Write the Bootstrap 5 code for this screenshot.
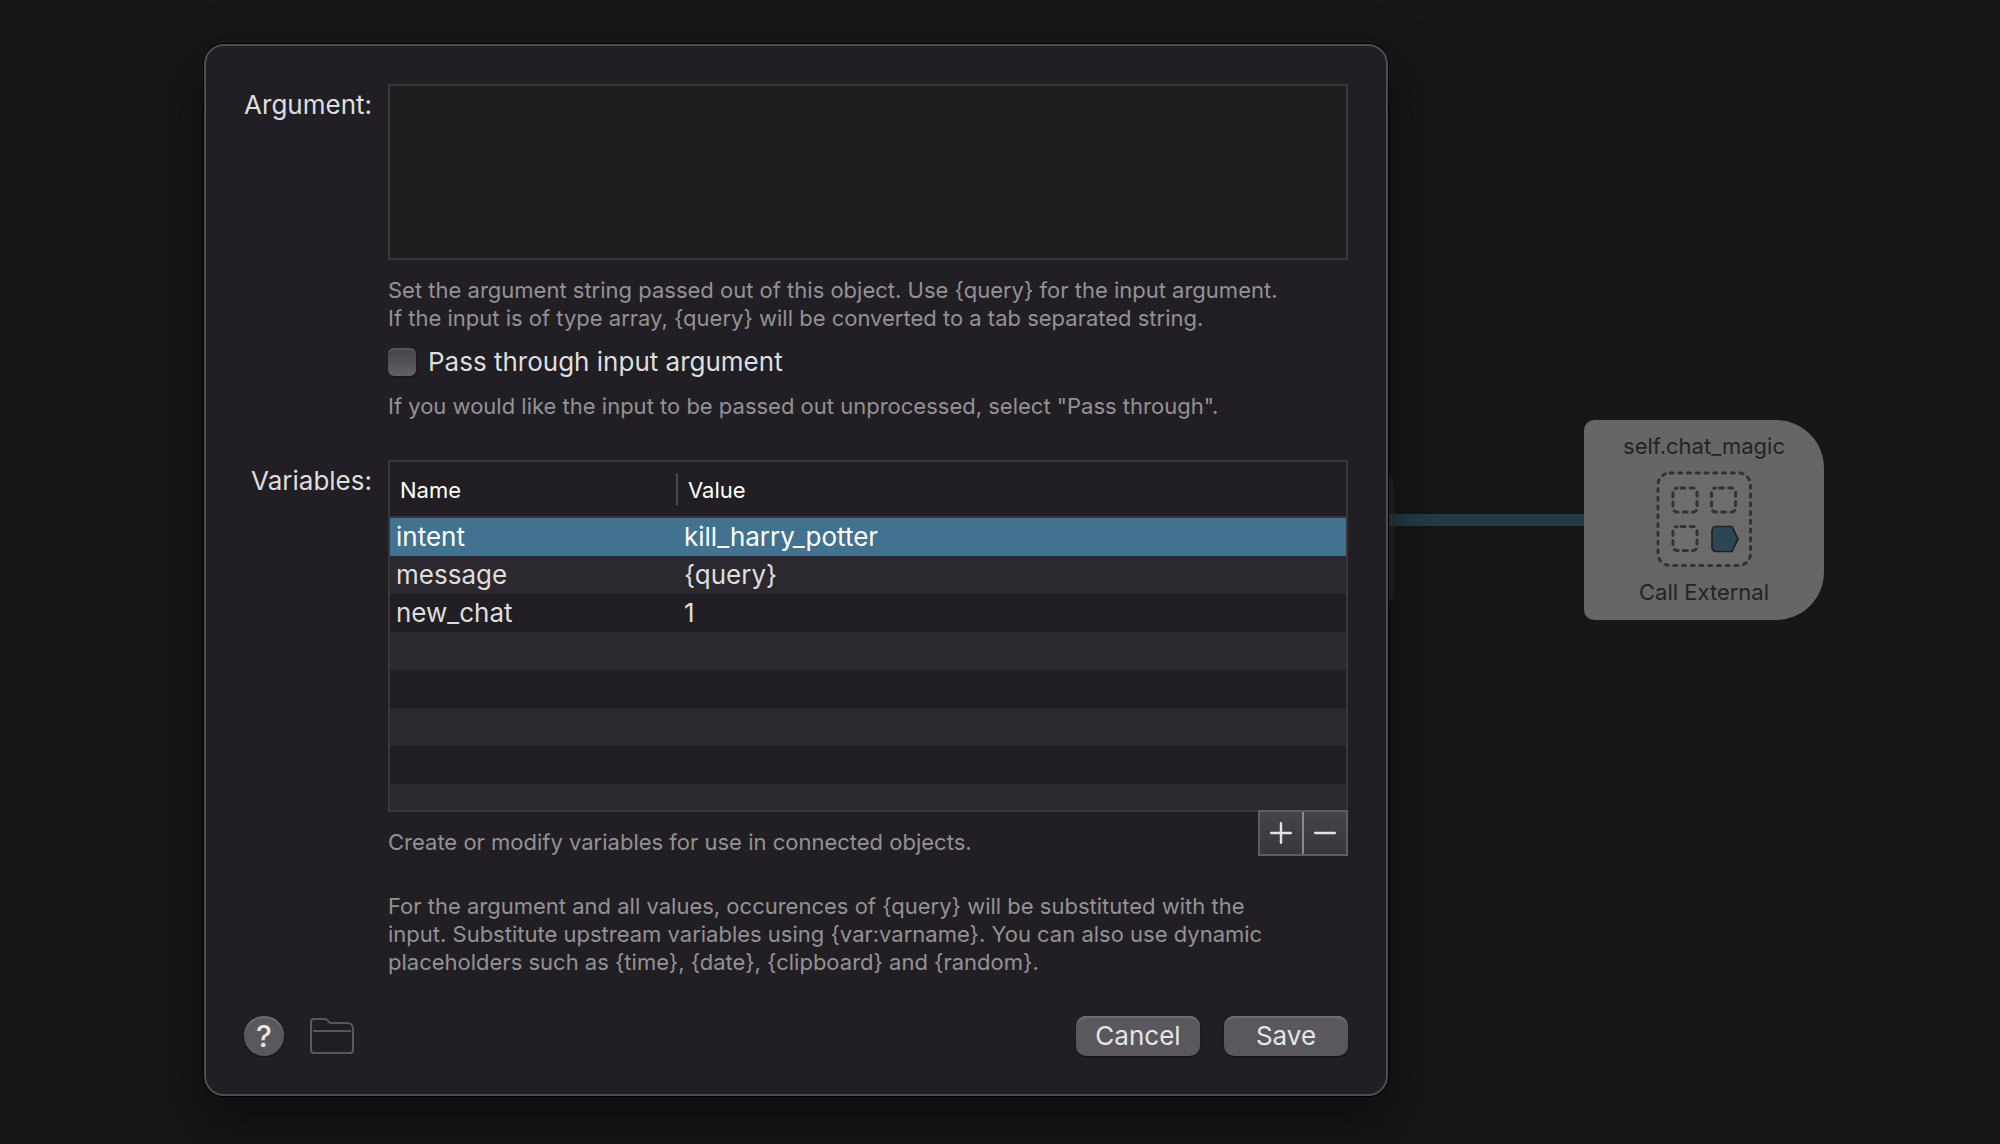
<!DOCTYPE html>
<html lang="en">
<head>
<meta charset="utf-8">
<meta name="viewport" content="width=device-width, initial-scale=1">
<title>Arg and Vars</title>
<link rel="stylesheet" href="https://cdn.jsdelivr.net/npm/bootstrap@5.3.0/dist/css/bootstrap.min.css">
<script src="https://cdn.jsdelivr.net/npm/bootstrap@5.3.0/dist/js/bootstrap.bundle.min.js"></script>
<style>
  body { background: #171717; color: #dededf; font-family: Inter, "Liberation Sans", sans-serif; font-size: 26px; line-height: 32px; }
  .stage { padding: 44px 204px 48px; min-height: 100vh; }
  /* workflow canvas behind the sheet */
  .flow-canvas { inset: 0; overflow: hidden; }
  .flow-link { left: 1300px; top: 514px; width: 284px; height: 12px; background: #243c46; }
  .prev-node { left: 1154px; top: 472px; width: 240px; height: 132px; border-radius: 12px; background: rgba(60, 58, 30, .35); }
  .flow-node { left: 1584px; top: 420px; width: 240px; height: 200px; border-radius: 10px 48px 48px 10px; background: #666; color: #232323; font-size: 22px; line-height: 28px; padding: 12px 0 14px; }
  /* sheet */
  .sheet { width: 100%; max-width: 1184px; padding: 38px; background: #211f24; border: 2px solid #4e4d51; border-radius: 20px; box-shadow: 0 0 0 1px #000, 0 24px 56px 4px rgba(0, 0, 0, .45); }
  .side-label { width: 128px; padding-top: 5px; flex: none; text-align: right; white-space: nowrap; }
  .field-row { gap: 16px; }
  .arg-box { display: block; width: 100%; height: 176px; background: #1e1e1e; border: 2px solid #39383b; border-radius: 0; color: inherit; resize: none; padding: 6px; }
  .hint { font-size: 22px; line-height: 28px; color: #939295; margin: 0; }
  .stack { gap: 16px; }
  .tick-row { gap: 12px; line-height: 28px; }
  .tick { appearance: none; width: 28px; height: 28px; margin: 0; border-radius: 6px; background: linear-gradient(#454348, #626065); box-shadow: inset 0 2px 0 #58565b, 0 1px 2px rgba(0, 0, 0, .4); }
  .var-frame { height: 352px; overflow: hidden; border: 2px solid #39373c; }
  .var-table { width: 100%; table-layout: fixed; border-collapse: separate; border-spacing: 0; }
  .var-table th { height: 56px; padding: 2px 10px 0; font-size: 22px; font-weight: 400; line-height: 28px; color: #fff; border-bottom: 2px solid #37343a; }
  .var-table th:first-child { width: 288px; background: linear-gradient(#4b494e, #4b494e) right center / 2px 32px no-repeat; }
  .var-table td { height: 38px; padding: 0 6px; line-height: 38px; }
  .var-table tbody tr:nth-child(even) { background: #2c282f; }
  .var-table tbody tr.picked { background: #41728f; color: #fff; }
  .under-table { gap: 16px; }
  .under-table .hint { padding-top: 16px; }
  .step-pair { margin-top: -2px; width: 90px; height: 46px; border: 2px solid #5f5d62; background: linear-gradient(#454448, #3a373c); }
  .step-btn { flex: 1; padding: 0; border: 0; background: none; color: #e4e4e4; }
  .step-btn + .step-btn { border-left: 2px solid #89888b; }
  .step-btn svg { display: block; margin: 0 auto; }
  .push { width: 124px; height: 40px; padding: 0; border: 0; border-radius: 10px; background: #5a585c; color: #e6e6e6; font-size: 26px; line-height: 38px; box-shadow: inset 0 2px 0 #6f6d71, 0 1px 2px rgba(0, 0, 0, .5); }
  .push:hover { background: #68666a; color: #fff; }
  .push-round { width: 40px; border-radius: 20px; font-size: 30px; font-weight: 500; line-height: 40px; }
  .folder-btn { padding: 0; border: 0; background: none; }
  .folder-btn svg { display: block; }
  .actions { gap: 24px; padding-top: 40px; }
  .notes { padding-top: 36px; }
  .vars-row { padding-top: 40px; }
</style>
</head>
<body>
<main class="stage position-relative">
  <div class="flow-canvas position-absolute">
    <div class="flow-link position-absolute"></div>
    <div class="prev-node position-absolute"></div>
    <section class="flow-node position-absolute d-flex flex-column align-items-center justify-content-between">
      <div>self.chat_magic</div>
      <svg width="96" height="96" viewBox="0 0 96 96" fill="none" stroke="#333" stroke-width="3" stroke-linecap="round" aria-hidden="true">
        <rect x="2" y="2" width="92.500" height="92.500" rx="12" fill="#6b6b6b" stroke-dasharray="3 5.750"/>
        <g fill="#6e6e6e" stroke-dasharray="4 5.200" stroke-dashoffset="-4">
          <rect x="17" y="17" width="24" height="24" rx="4"/>
          <rect x="55.500" y="17" width="24" height="24" rx="4"/>
          <rect x="17" y="55.500" width="24" height="24" rx="4"/>
        </g>
        <path d="M60.500 55.500H76L82 68 76 80.500H60.500Q56 80.500 56 76V60Q56 55.500 60.500 55.500Z" fill="#2c4653" stroke="#222" stroke-width="1.700"/>
      </svg>
      <div>Call External</div>
    </section>
  </div>

  <form class="sheet position-relative" onsubmit="return false">
    <div class="field-row d-flex">
      <label class="side-label" for="argument">Argument:</label>
      <div class="stack d-flex flex-column flex-grow-1">
        <textarea class="arg-box" id="argument"></textarea>
        <p class="hint">Set the argument string passed out of this object. Use {query} for the input argument.<br>If the input is of type array, {query} will be converted to a tab separated string.</p>
        <div class="tick-row d-flex align-items-center">
          <input class="tick" type="checkbox" id="passthrough">
          <label for="passthrough">Pass through input argument</label>
        </div>
        <p class="hint">If you would like the input to be passed out unprocessed, select "Pass through".</p>
      </div>
    </div>

    <div class="vars-row field-row d-flex">
      <div class="side-label" id="vars-label">Variables:</div>
      <div class="flex-grow-1">
        <div class="var-frame">
          <table class="var-table" aria-labelledby="vars-label">
            <thead><tr><th scope="col">Name</th><th scope="col">Value</th></tr></thead>
            <tbody>
              <tr class="picked"><td>intent</td><td>kill_harry_potter</td></tr>
              <tr><td>message</td><td>{query}</td></tr>
              <tr><td>new_chat</td><td>1</td></tr>
              <tr><td></td><td></td></tr>
              <tr><td></td><td></td></tr>
              <tr><td></td><td></td></tr>
              <tr><td></td><td></td></tr>
              <tr><td></td><td></td></tr>
            </tbody>
          </table>
        </div>
        <div class="under-table d-flex justify-content-between align-items-start">
          <p class="hint">Create or modify variables for use in connected objects.</p>
          <div class="step-pair position-relative d-flex">
            <button class="step-btn" type="button" aria-label="Add variable"><svg width="22" height="22" viewBox="0 0 22 22" stroke="currentColor" stroke-width="2.400" stroke-linecap="round"><path d="M1.200 11H20.800M11 1.200V20.800"/></svg></button>
            <button class="step-btn" type="button" aria-label="Remove variable"><svg width="22" height="22" viewBox="0 0 22 22" stroke="currentColor" stroke-width="2.400" stroke-linecap="round"><path d="M1.200 11H20.800"/></svg></button>
          </div>
        </div>
        <p class="hint notes">For the argument and all values, occurences of {query} will be substituted with the<br>input. Substitute upstream variables using {var:varname}. You can also use dynamic<br>placeholders such as {time}, {date}, {clipboard} and {random}.</p>
      </div>
    </div>

    <div class="actions d-flex align-items-center">
      <button class="btn push push-round" type="button" aria-label="Help">?</button>
      <button class="folder-btn me-auto" type="button" aria-label="Open folder"><svg width="48" height="40" viewBox="0 0 48 40" fill="none" stroke="#59575b" stroke-width="2"><path d="M3 34V6Q3 3 6 3H17Q18.500 3 19.500 4.200L21 6Q22 7 23.500 7H39Q45 7 45 13V34Q45 37 42 37H6Q3 37 3 34ZM5 15H43"/></svg></button>
      <button class="btn push" type="button">Cancel</button>
      <button class="btn push" type="submit">Save</button>
    </div>
  </form>
</main>
</body>
</html>
